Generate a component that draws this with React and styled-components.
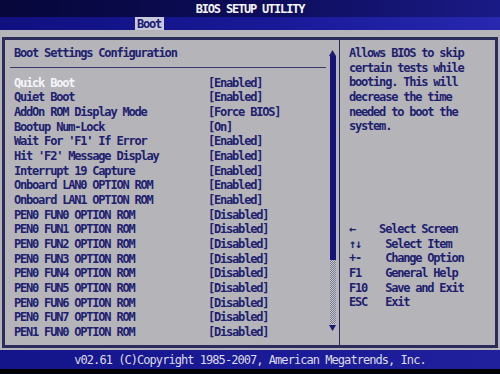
import React from 'react'
import styled, { createGlobalStyle } from 'styled-components'

const Global = createGlobalStyle`
  html, body {
    margin: 0;
    padding: 0;
    background: #000;
  }
`

const Screen = styled.div`
  width: 500px;
  height: 374px;
  display: flex;
  flex-flow: column nowrap;
  background: #b4b4b9;
  font-family: "DejaVu Sans Mono", "Liberation Mono", monospace;
  font-weight: bold;
  font-size: 12px;
  letter-spacing: -1.2px;
  overflow: hidden;
`

const TitleBar = styled.div`
  height: 17px;
  display: flex;
  align-items: center;
  justify-content: center;
  background: linear-gradient(90deg, #06063a 0%, #0c0c58 50%, #1a1a86 100%);
  color: #f4f4f8;
  padding-top: 1px;
  box-sizing: border-box;
`

const MenuBar = styled.div`
  height: 13px;
  display: flex;
  align-items: stretch;
  padding-left: 135px;
  background: linear-gradient(90deg, #101080 0%, #1a1a9a 60%, #2828b0 100%);
`

const Tab = styled.div`
  display: flex;
  align-items: center;
  padding: 0 3px 0 2px;
  background: ${p => (p.$active ? '#c8c8dc' : 'transparent')};
  color: ${p => (p.$active ? '#1a1a70' : '#e8e8f0')};
`

const Frame = styled.div`
  margin: 7px 2px 0 2px;
  height: 311px;
  box-sizing: border-box;
  border: 3px double #2c2c5c;
  display: grid;
  grid-template-columns: 334px 155px;
  column-gap: 1px;
  background-color: #2c2c5c;
`

const LeftPanel = styled.div`
  background: #b4b4b9;
  display: flex;
  flex-flow: row nowrap;
`

const Content = styled.div`
  flex: 1;
  display: flex;
  flex-flow: column nowrap;
  padding-top: 6px;
`

const Heading = styled.div`
  padding-left: 9px;
  line-height: 14.67px;
  color: #20206e;
`

const Separator = styled.div`
  margin: 6px 3px 8px 5px;
  height: 1px;
  background: #3a3a6a;
`

const Row = styled.div`
  display: flex;
  padding-left: 9px;
  line-height: 14.67px;
  white-space: pre;
`

const Label = styled.span`
  width: 194px;
  color: ${p => (p.$selected ? '#f4f4fa' : '#20206e')};
`

const Value = styled.span`
  color: #20206e;
`

const Scrollbar = styled.div`
  width: 7px;
  margin-right: 3px;
  padding-top: 9px;
  display: flex;
  flex-flow: column nowrap;
  align-items: center;
`

const Arrow = styled.div`
  width: 7px;
  height: 7px;
  display: flex;
  align-items: center;
  justify-content: center;
`

const Track = styled.div`
  width: 6px;
  height: ${p => p.$h}px;
  background: ${p =>
    p.$thumb
      ? '#141478'
      : 'repeating-conic-gradient(#7c7c90 0% 25%, #c4c4cc 0% 50%) 0 0 / 2px 2px'};
`

const RightPanel = styled.div`
  background: #b4b4b9;
  padding: 6px 0 0 9px;
  display: flex;
  flex-flow: column nowrap;
`

const HelpLine = styled.div`
  line-height: 14.67px;
  color: #1e1e6e;
  white-space: pre;
`

const Legend = styled.div`
  margin-top: 88px;
  display: flex;
  flex-flow: column nowrap;
`

const Footer = styled.div`
  margin-top: 2px;
  height: 19px;
  display: flex;
  align-items: center;
  justify-content: center;
  background: linear-gradient(90deg, #14148a 0%, #1a1a96 50%, #20209c 100%);
  color: #dcdce8;
  font-weight: normal;
  letter-spacing: -0.95px;
`

const Bottom = styled.div`
  flex: 1;
  background: #000;
`

const settings = [
  ['Quick Boot', '[Enabled]', true],
  ['Quiet Boot', '[Enabled]'],
  ['AddOn ROM Display Mode', '[Force BIOS]'],
  ['Bootup Num-Lock', '[On]'],
  ["Wait For 'F1' If Error", '[Enabled]'],
  ["Hit 'F2' Message Display", '[Enabled]'],
  ['Interrupt 19 Capture', '[Enabled]'],
  ['Onboard LAN0 OPTION ROM', '[Enabled]'],
  ['Onboard LAN1 OPTION ROM', '[Enabled]'],
  ['PEN0 FUN0 OPTION ROM', '[Disabled]'],
  ['PEN0 FUN1 OPTION ROM', '[Disabled]'],
  ['PEN0 FUN2 OPTION ROM', '[Disabled]'],
  ['PEN0 FUN3 OPTION ROM', '[Disabled]'],
  ['PEN0 FUN4 OPTION ROM', '[Disabled]'],
  ['PEN0 FUN5 OPTION ROM', '[Disabled]'],
  ['PEN0 FUN6 OPTION ROM', '[Disabled]'],
  ['PEN0 FUN7 OPTION ROM', '[Disabled]'],
  ['PEN1 FUN0 OPTION ROM', '[Disabled]'],
]

const help = [
  'Allows BIOS to skip',
  'certain tests while',
  'booting. This will',
  'decrease the time',
  'needed to boot the',
  'system.',
]

const keys = [
  '\u2190    Select Screen',
  '\u2191\u2193    Select Item',
  '+-    Change Option',
  'F1    General Help',
  'F10   Save and Exit',
  'ESC   Exit',
]

function Triangle({ up }) {
  return (
    <svg width="7" height="6" viewBox="0 0 7 6">
      <polygon points={up ? '3.5,0 7,6 0,6' : '0,0 7,0 3.5,6'} fill="#1a1a6e" />
    </svg>
  )
}

export default function App() {
  return (
    <Screen>
      <Global />
      <TitleBar>BIOS SETUP UTILITY</TitleBar>
      <MenuBar>
        <Tab $active>Boot</Tab>
      </MenuBar>
      <Frame>
        <LeftPanel>
          <Content>
            <Heading>Boot Settings Configuration</Heading>
            <Separator />
            {settings.map(([label, value, selected]) => (
              <Row key={label}>
                <Label $selected={selected}>{label}</Label>
                <Value>{value}</Value>
              </Row>
            ))}
          </Content>
          <Scrollbar>
            <Arrow><Triangle up /></Arrow>
            <Track $thumb $h={204} />
            <Track $h={64} />
            <Arrow><Triangle /></Arrow>
          </Scrollbar>
        </LeftPanel>
        <RightPanel>
          {help.map(line => (
            <HelpLine key={line}>{line}</HelpLine>
          ))}
          <Legend>
            {keys.map(line => (
              <HelpLine key={line}>{line}</HelpLine>
            ))}
          </Legend>
        </RightPanel>
      </Frame>
      <Footer>v02.61 (C)Copyright 1985-2007, American Megatrends, Inc.</Footer>
      <Bottom />
    </Screen>
  )
}
